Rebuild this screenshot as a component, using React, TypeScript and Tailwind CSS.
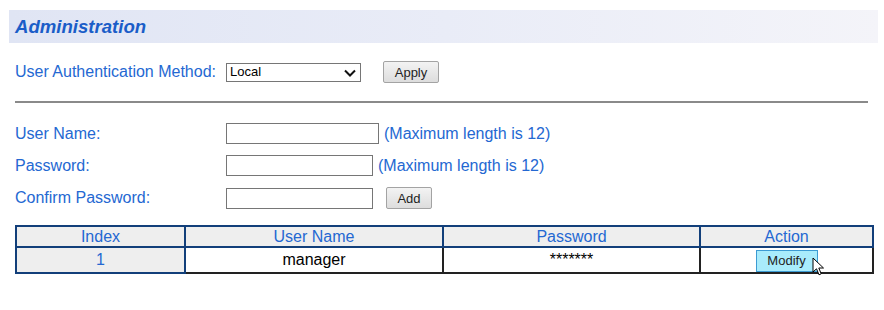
import React from 'react';

interface UserRow {
  index: number;
  name: string;
  password: string;
}

const users: UserRow[] = [{ index: 1, name: 'manager', password: '*******' }];

const FormButton: React.FC<{ label: string; className?: string }> = ({ label, className }) => (
  <button
    className={`h-[22px] border border-[#a3a3a3] rounded-[2px] bg-gradient-to-b from-[#f3f3f3] to-[#dddddd] text-[13px] text-[#222] leading-none ${className ?? ''}`}
  >
    {label}
  </button>
);

const App: React.FC = () => {
  return (
    <div className="w-[884px] h-[310px] bg-white px-[9px] pt-[10px] font-['Liberation_Sans',Arial,sans-serif] relative">
      {/* Title band */}
      <div className="w-[869px] h-[33px] flex items-center pl-[6px] bg-gradient-to-r from-[#e0e5f4] via-[#e9ecf7] to-[#f4f4f9]">
        <h1 className="text-[18.6px] font-bold italic text-[#1a5dc8]">Administration</h1>
      </div>

      <div className="pl-[6px]">
        {/* Auth method */}
        <div className="flex items-center h-[22px] mt-[18px]">
          <span className="w-[211px] text-[16px] text-[#2468d2]">User Authentication Method:</span>
          <div className="relative w-[135px] h-[19px] border border-[#767676] bg-white flex items-center pl-[3px]">
            <span className="text-[13px] text-black">Local</span>
            <svg className="absolute right-[4px] top-[5px]" width="12" height="8" viewBox="0 0 12 8">
              <path d="M1 1.5 L6 6.5 L11 1.5" fill="none" stroke="#111" strokeWidth="2" />
            </svg>
          </div>
          <FormButton label="Apply" className="w-[56px] ml-[22px]" />
        </div>

        {/* Separator */}
        <div className="w-[853px] mt-[18px] border-t-2 border-[#8a8a8a]" />

        {/* User form */}
        <div className="flex flex-col gap-[11px] mt-[20px]">
          <div className="flex items-center h-[21px]">
            <span className="w-[211px] text-[16px] text-[#2468d2]">User Name:</span>
            <input className="w-[153px] h-[21px] border border-[#767676]" />
            <span className="ml-[5px] text-[16px] text-[#2468d2]">(Maximum length is 12)</span>
          </div>
          <div className="flex items-center h-[21px]">
            <span className="w-[211px] text-[16px] text-[#2468d2]">Password:</span>
            <input type="password" className="w-[147px] h-[21px] border border-[#767676]" />
            <span className="ml-[5px] text-[16px] text-[#2468d2]">(Maximum length is 12)</span>
          </div>
          <div className="flex items-center h-[22px]">
            <span className="w-[211px] text-[16px] text-[#2468d2]">Confirm Password:</span>
            <input type="password" className="w-[147px] h-[21px] border border-[#767676]" />
            <FormButton label="Add" className="w-[46px] ml-[13px]" />
          </div>
        </div>

        {/* Users table */}
        <table className="mt-[16px] table-fixed border-collapse w-[857px]">
          <colgroup>
            <col className="w-[169px]" />
            <col className="w-[258px]" />
            <col className="w-[257px]" />
            <col className="w-[173px]" />
          </colgroup>
          <thead>
            <tr className="h-[21px]">
              {['Index', 'User Name', 'Password', 'Action'].map(h => (
                <th
                  key={h}
                  className="border-2 border-[#123f7a] bg-[#eeeeee] p-0 text-[16px] font-normal text-[#2468d2] leading-[17px]"
                >
                  {h}
                </th>
              ))}
            </tr>
          </thead>
          <tbody>
            {users.map(u => (
              <tr key={u.index} className="h-[25px]">
                <td className="border-2 border-[#123f7a] bg-[#eeeeee] p-0 text-center text-[16px] text-[#2468d2]">
                  {u.index}
                </td>
                <td className="border-2 border-[#222] bg-white p-0 text-center text-[16px] text-black">{u.name}</td>
                <td className="border-2 border-[#222] bg-white p-0 text-center align-top text-[16px] text-black">
                  {u.password}
                </td>
                <td className="border-2 border-[#222] bg-white p-0 text-center">
                  <div className="relative inline-block">
                    <button className="w-[62px] h-[22px] border border-[#3c9bd3] bg-[#a9ecfc] text-[13px] text-[#222] leading-none">
                      Modify
                    </button>
                    {/* mouse pointer */}
                    <svg className="absolute left-[56px] top-[9px]" width="13" height="20" viewBox="0 0 13 20">
                      <path
                        d="M1 1 L1 15 L4.5 11.8 L7 17.8 L9.2 16.8 L6.8 11 L11.5 11 Z"
                        fill="#fff"
                        stroke="#000"
                        strokeWidth="1"
                        strokeLinejoin="round"
                      />
                    </svg>
                  </div>
                </td>
              </tr>
            ))}
          </tbody>
        </table>
      </div>
    </div>
  );
};

export default App;
